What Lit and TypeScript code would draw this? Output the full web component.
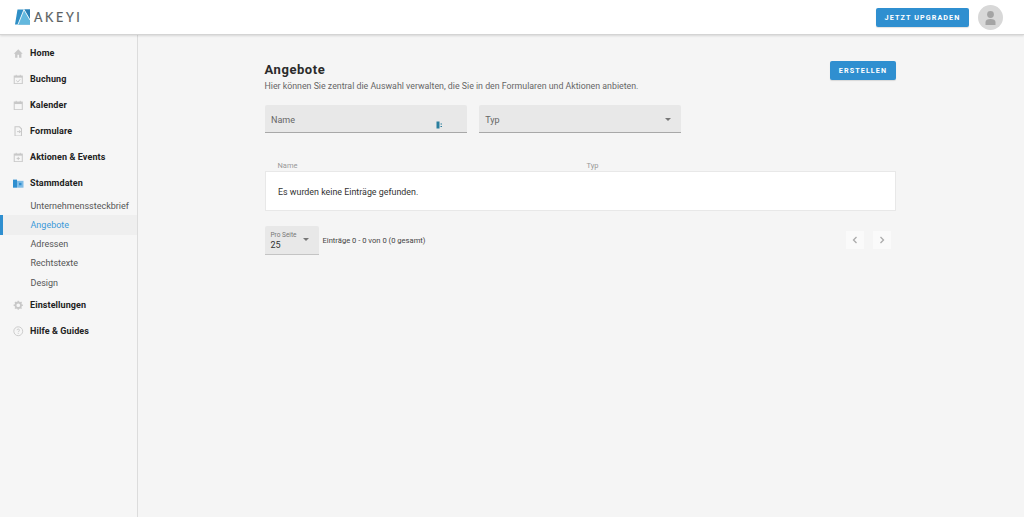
import { LitElement, html, css, svg } from "lit";
import { customElement } from "lit/decorators.js";

const G = "#c8c8c8";
const icons: Record<string, unknown> = {
  home: svg`<path d="M6.500 1.500 1 7h1.600v5h2.900V8.500h2V12h2.900V7H12z" fill="${G}"/>`,
  check: svg`<rect x="1.500" y="2.500" width="10" height="9.500" fill="none" stroke="${G}" stroke-width="1.200"/><path d="M1.500 2.500h10v2h-10z" fill="${G}"/><path d="M4 8l2 2 3-3.500" fill="none" stroke="${G}" stroke-width="1.200"/><path d="M4 1v2M9 1v2" stroke="${G}" stroke-width="1.200"/>`,
  cal: svg`<rect x="1.500" y="2.500" width="10" height="9.500" fill="none" stroke="${G}" stroke-width="1.200"/><path d="M1.500 2.500h10v2.500h-10z" fill="${G}"/><path d="M4 1v2M9 1v2" stroke="${G}" stroke-width="1.200"/>`,
  form: svg`<path d="M2.500 1h5.500l2.500 2.500V12.500h-8z" fill="none" stroke="${G}" stroke-width="1.300"/><path d="M5 7h4M7.500 5.500 9.500 7l-2 1.500" fill="none" stroke="${G}" stroke-width="1.200"/>`,
  event: svg`<rect x="1.500" y="2.500" width="10" height="9.500" fill="none" stroke="${G}" stroke-width="1.200"/><path d="M1.500 2.500h10v2h-10z" fill="${G}"/><path d="M6.500 6v4M4.500 8h4M4 1v2M9 1v2" stroke="${G}" stroke-width="1.200"/>`,
  folder: svg`<path d="M0 2h5v10H0z" fill="#2f8fd0"/><path d="M5 3.500h8V12H5z" fill="#7fbce6"/><path d="M7.500 6h3v3h-3z" fill="#2f8fd0"/>`,
  gear: svg`<circle cx="6.500" cy="6.500" r="3.400" fill="none" stroke="${G}" stroke-width="2.200"/><path d="M6.500.8v2M6.500 10.200v2M.8 6.500h2M10.200 6.500h2M2.400 2.400l1.400 1.400M9.200 9.200l1.400 1.400M10.600 2.400 9.200 3.800M3.800 9.200l-1.400 1.400" stroke="${G}" stroke-width="1.600"/>`,
  help: svg`<circle cx="6.500" cy="6.500" r="5.500" fill="none" stroke="${G}" stroke-width="1.100"/><path d="M5 5.200c0-2 3-2 3 0 0 1.200-1.500 1.200-1.500 2.500M6.500 8.800v1" fill="none" stroke="${G}" stroke-width="1.100"/>`,
};

const top = [
  ["home", "Home"],
  ["check", "Buchung"],
  ["cal", "Kalender"],
  ["form", "Formulare"],
  ["event", "Aktionen & Events"],
  ["folder", "Stammdaten"],
];
const subs = ["Unternehmenssteckbrief", "Angebote", "Adressen", "Rechtstexte", "Design"];
const bottom = [
  ["gear", "Einstellungen"],
  ["help", "Hilfe & Guides"],
];

@customElement("app-root")
export class AppRoot extends LitElement {
  static styles = css`
    :host {
      display: block;
      width: 1024px;
      height: 517px;
      overflow: hidden;
      background: #f5f5f5;
      font-family: "Roboto", "Noto Sans", sans-serif;
      color: #333;
    }
    .header {
      height: 34px;
      background: #fff;
      border-bottom: 1px solid #d4d4d4;
      box-shadow: 0 1px 2px rgba(0, 0, 0, 0.12);
      display: flex;
      align-items: center;
      justify-content: space-between;
      padding: 0 21px 0 15px;
      position: relative;
    }
    .logo {
      display: flex;
      align-items: center;
      gap: 4px;
    }
    .logo-text {
      font-family: "Lato", sans-serif;
      font-size: 12.5px;
      letter-spacing: 2.65px;
      color: #5a5f63;
      -webkit-text-stroke: 0.2px #5a5f63;
    }
    .head-right {
      display: flex;
      align-items: center;
      gap: 9px;
    }
    .btn {
      background: #2f8fd0;
      color: #fff;
      border-radius: 2px;
      font-size: 7.2px;
      font-weight: 700;
      letter-spacing: 1.1px;
      display: flex;
      align-items: center;
      justify-content: center;
      height: 19px;
      box-shadow: 0 1px 1px rgba(0, 0, 0, 0.12);
    }
    .up { width: 93px; }
    .new { width: 66px; }
    .avatar {
      width: 25px;
      height: 25px;
      border-radius: 50%;
      background: #d8d8d8;
      display: block;
    }
    .body {
      display: flex;
      height: 482px;
    }
    .side {
      width: 138px;
      flex: none;
      box-sizing: border-box;
      border-right: 1px solid #dcdcdc;
      background: #f6f6f6;
      padding-top: 5px;
    }
    .item {
      height: 26px;
      display: flex;
      align-items: center;
      gap: 6.5px;
      padding-left: 13px;
      font-size: 9px;
      font-weight: 700;
      letter-spacing: 0.1px;
      color: #222;
    }
    .item svg { flex: none; width: 10.500px; height: 10.500px; display: block; }
    .subs { display: flex; flex-direction: column; }
    .sub {
      height: 19.25px;
      display: flex;
      align-items: center;
      padding-left: 30.5px;
      font-size: 9px;
      color: #555;
    }
    .sub.active {
      color: #3a9ad9;
      background: #efefef;
      box-shadow: inset 3px 0 0 #2f8fd0;
    }
    .main {
      flex: 1;
      padding: 26px 0 0 126.5px;
    }
    .content { width: 631.5px; }
    .title-row {
      display: flex;
      justify-content: space-between;
      align-items: flex-start;
    }
    h1 {
      margin: 0;
      font-size: 13px;
      line-height: 18px;
      font-weight: 700;
      letter-spacing: 0.55px;
      color: #2b2b2b;
    }
    .desc {
      margin: 1px 0 0;
      font-size: 8.8px;
      line-height: 13px;
      color: #666;
    }
    .filters {
      display: flex;
      gap: 12px;
      margin-top: 12px;
    }
    .field {
      width: 202.25px;
      height: 28px;
      box-sizing: border-box;
      background: #e8e8e8;
      border-bottom: 1px solid #a8a8a8;
      border-radius: 2px 2px 0 0;
      font-size: 9px;
      color: #666;
      display: flex;
      align-items: center;
      justify-content: space-between;
      padding: 2px 10px 0 6.5px;
      position: relative;
    }
    .caret {
      width: 0;
      height: 0;
      border-left: 3px solid transparent;
      border-right: 3px solid transparent;
      border-top: 3px solid #777;
    }
    .cursor {
      position: absolute;
      left: 171px;
      top: 16px;
      width: 7px;
      height: 8px;
    }
    .heads {
      display: flex;
      margin-top: 27px;
      padding-left: 13px;
      font-size: 7.5px;
      line-height: 11px;
      color: #999;
    }
    .heads span:first-child { width: 309px; }
    .card {
      background: #fff;
      border: 1px solid #e8e8e8;
      height: 40px;
      box-sizing: border-box;
      padding: 1px 0 0 12.5px;
      display: flex;
      align-items: center;
      font-size: 8.9px;
      color: #333;
    }
    .pager {
      display: flex;
      align-items: center;
      margin-top: 15px;
    }
    .per {
      width: 54px;
      height: 29px;
      box-sizing: border-box;
      background: #e8e8e8;
      border-bottom: 1px solid #c4c4c4;
      border-radius: 2px 2px 0 0;
      padding: 5px 0 0 6px;
      position: relative;
      flex: none;
    }
    .per small { display: block; font-size: 6.5px; line-height: 8px; color: #777; }
    .per b { display: block; font-size: 9px; line-height: 13px; font-weight: 400; color: #333; }
    .per .caret { position: absolute; right: 10px; top: 12px; }
    .count {
      margin: -1px 0 0 4px;
      font-size: 7.6px;
      color: #444;
      flex: 1;
    }
    .nav {
      display: flex;
      gap: 9px;
      margin: -1px 5px 0 0;
    }
    .nav span {
      width: 18px;
      height: 18px;
      background: #fafafa;
      display: flex;
      align-items: center;
      justify-content: center;
    }
    .nav svg { width: 8px; height: 8px; display: block; }
  `;

  item(i: string[]) {
    return html`<div class="item">
      <svg viewBox="0 0 13 13">${icons[i[0]]}</svg><span>${i[1]}</span>
    </div>`;
  }

  render() {
    return html`
      <div class="header">
        <div class="logo">
          <svg width="15" height="16" viewBox="0 0 15 16">
            <path d="M2.500 0.500h12.500v15H0z" fill="#2f8fc6" />
            <path d="M9 0.500h6v10z" fill="#2a7fb5" />
            <path d="M9 0.500 3 15.500h12v-5z" fill="#63b8de" />
            <path d="M9 0.500 3 15.500M9 0.500l6 10.500" fill="none" stroke="#fff" stroke-width="0.900" />
          </svg>
          <span class="logo-text">AKEYI</span>
        </div>
        <div class="head-right">
          <div class="btn up">JETZT UPGRADEN</div>
          <svg class="avatar" viewBox="0 0 25 25">
            <circle cx="12.500" cy="9.500" r="3.400" fill="#a4a4a4" />
            <path d="M7.500 20v-3c0-2 2-3 5-3s5 1 5 3v3z" fill="#a4a4a4" />
          </svg>
        </div>
      </div>
      <div class="body">
        <nav class="side">
          ${top.map((i) => this.item(i))}
          <div class="subs">
            ${subs.map(
              (s) => html`<div class="sub ${s === "Angebote" ? "active" : ""}">${s}</div>`
            )}
          </div>
          ${bottom.map((i) => this.item(i))}
        </nav>
        <main class="main">
          <div class="content">
            <div class="title-row">
              <div>
                <h1>Angebote</h1>
                <p class="desc">
                  Hier können Sie zentral die Auswahl verwalten, die Sie in den Formularen und
                  Aktionen anbieten.
                </p>
              </div>
              <div class="btn new">ERSTELLEN</div>
            </div>
            <div class="filters">
              <div class="field">
                <span>Name</span>
                <svg class="cursor" viewBox="0 0 7 8">
                  <path d="M0.500 0.500h3v7h-3z" fill="#2a7f9e" />
                  <path d="M4.500 2.500h1.500v1h-1.500zM4.500 5h1.500v1h-1.500z" fill="#2a7f9e" />
                </svg>
              </div>
              <div class="field"><span>Typ</span><i class="caret"></i></div>
            </div>
            <div class="heads"><span>Name</span><span>Typ</span></div>
            <div class="card">Es wurden keine Einträge gefunden.</div>
            <div class="pager">
              <div class="per">
                <small>Pro Seite</small><b>25</b><i class="caret"></i>
              </div>
              <div class="count">Einträge 0 - 0 von 0 (0 gesamt)</div>
              <div class="nav">
                <span><svg viewBox="0 0 8 8"><path d="M5.500 1 2.500 4l3 3" fill="none" stroke="#aaa" stroke-width="1.300" /></svg></span>
                <span><svg viewBox="0 0 8 8"><path d="M2.500 1l3 3-3 3" fill="none" stroke="#aaa" stroke-width="1.300" /></svg></span>
              </div>
            </div>
          </div>
        </main>
      </div>
    `;
  }
}
